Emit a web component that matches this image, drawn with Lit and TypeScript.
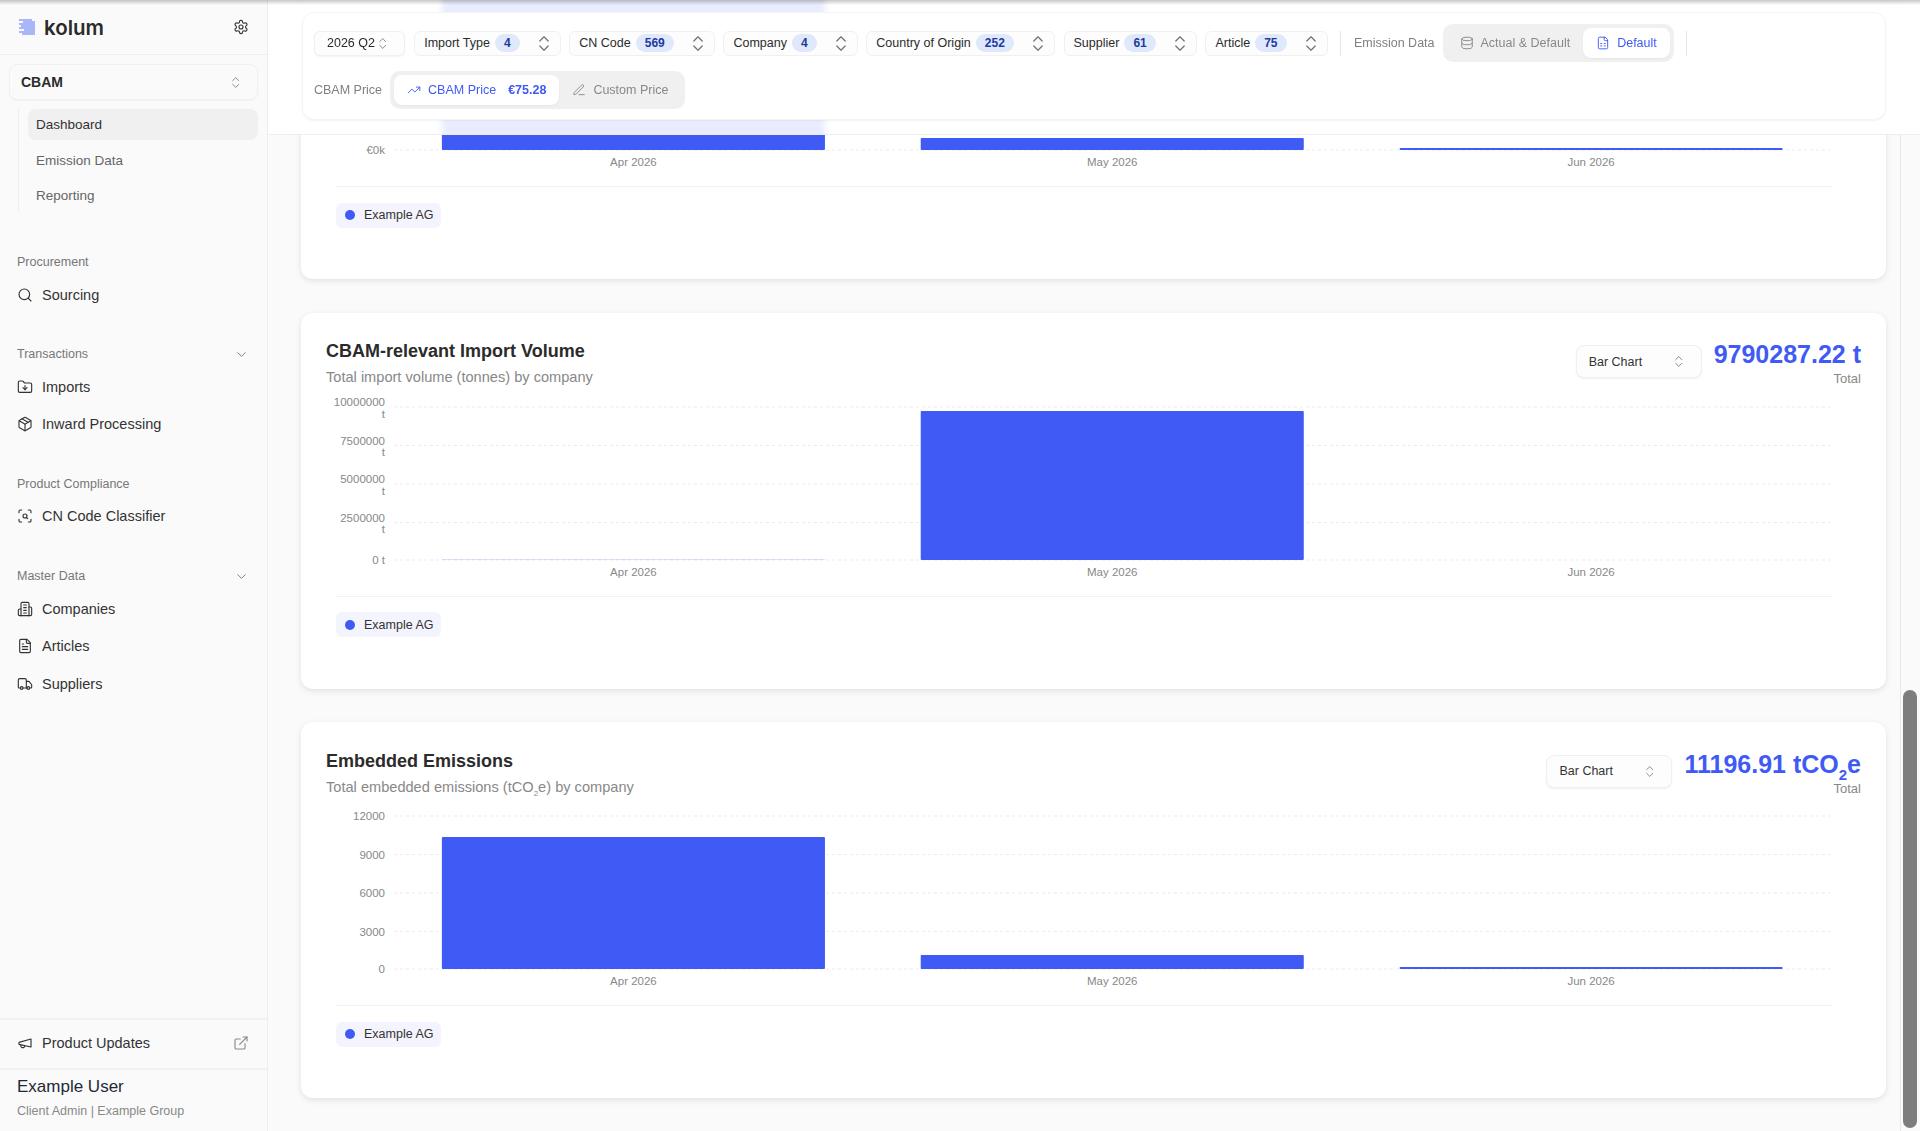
import { LitElement, html, css, svg } from 'lit';
import { customElement } from 'lit/decorators.js';

const ICONS: Record<string, unknown> = {
  settings: svg`<path d="M12.22 2h-.44a2 2 0 0 0-2 2v.18a2 2 0 0 1-1 1.73l-.43.25a2 2 0 0 1-2 0l-.15-.08a2 2 0 0 0-2.73.73l-.22.38a2 2 0 0 0 .73 2.73l.15.1a2 2 0 0 1 1 1.72v.51a2 2 0 0 1-1 1.74l-.15.09a2 2 0 0 0-.73 2.73l.22.38a2 2 0 0 0 2.73.73l.15-.08a2 2 0 0 1 2 0l.43.25a2 2 0 0 1 1 1.73V20a2 2 0 0 0 2 2h.44a2 2 0 0 0 2-2v-.18a2 2 0 0 1 1-1.73l.43-.25a2 2 0 0 1 2 0l.15.08a2 2 0 0 0 2.73-.73l.22-.39a2 2 0 0 0-.73-2.73l-.15-.08a2 2 0 0 1-1-1.74v-.5a2 2 0 0 1 1-1.74l.15-.09a2 2 0 0 0 .73-2.73l-.22-.38a2 2 0 0 0-2.73-.73l-.15.08a2 2 0 0 1-2 0l-.43-.25a2 2 0 0 1-1-1.73V4a2 2 0 0 0-2-2z"/><circle cx="12" cy="12" r="3"/>`,
  search: svg`<circle cx="11" cy="11" r="8"/><path d="m21 21-4.3-4.3"/>`,
  imports: svg`<path d="M20 20a2 2 0 0 0 2-2V8a2 2 0 0 0-2-2h-7.9a2 2 0 0 1-1.69-.9L9.6 3.9A2 2 0 0 0 7.93 3H4a2 2 0 0 0-2 2v13a2 2 0 0 0 2 2Z"/><path d="M12 10v6"/><path d="m15 13-3 3-3-3"/>`,
  package: svg`<path d="M11 21.73a2 2 0 0 0 2 0l7-4A2 2 0 0 0 21 16V8a2 2 0 0 0-1-1.73l-7-4a2 2 0 0 0-2 0l-7 4A2 2 0 0 0 3 8v8a2 2 0 0 0 1 1.73z"/><path d="M12 22V12"/><path d="m3.3 7 7.703 4.734a2 2 0 0 0 1.994 0L20.7 7"/><path d="m7.5 4.27 9 5.15"/>`,
  scan: svg`<path d="M3 7V5a2 2 0 0 1 2-2h2"/><path d="M17 3h2a2 2 0 0 1 2 2v2"/><path d="M21 17v2a2 2 0 0 1-2 2h-2"/><path d="M7 21H5a2 2 0 0 1-2-2v-2"/><circle cx="12" cy="12" r="3"/><path d="m16 16-1.9-1.9"/>`,
  building: svg`<path d="M6 22V4a2 2 0 0 1 2-2h8a2 2 0 0 1 2 2v18Z"/><path d="M6 12H4a2 2 0 0 0-2 2v6a2 2 0 0 0 2 2h2"/><path d="M18 9h2a2 2 0 0 1 2 2v9a2 2 0 0 1-2 2h-2"/><path d="M10 6h4"/><path d="M10 10h4"/><path d="M10 14h4"/><path d="M10 18h4"/>`,
  file: svg`<path d="M15 2H6a2 2 0 0 0-2 2v16a2 2 0 0 0 2 2h12a2 2 0 0 0 2-2V7Z"/><path d="M14 2v4a2 2 0 0 0 2 2h4"/><path d="M10 9H8"/><path d="M16 13H8"/><path d="M16 17H8"/>`,
  truck: svg`<path d="M14 18V6a2 2 0 0 0-2-2H4a2 2 0 0 0-2 2v11a1 1 0 0 0 1 1h2"/><path d="M15 18H9"/><path d="M19 18h2a1 1 0 0 0 1-1v-3.65a1 1 0 0 0-.22-.624l-3.48-4.35A1 1 0 0 0 17.52 8H14"/><circle cx="17" cy="18" r="2"/><circle cx="7" cy="18" r="2"/>`,
  megaphone: svg`<path d="m3 11 18-5v12L3 14v-3z"/><path d="M11.6 16.8a3 3 0 1 1-5.8-1.6"/>`,
  external: svg`<path d="M15 3h6v6"/><path d="M10 14 21 3"/><path d="M18 13v6a2 2 0 0 1-2 2H5a2 2 0 0 1-2-2V8a2 2 0 0 1 2-2h6"/>`,
  chevron: svg`<path d="m6 9 6 6 6-6"/>`,
  trending: svg`<path d="m22 7-8.5 8.5-5-5L2 17"/><path d="M16 7h6v6"/>`,
  pen: svg`<path d="M12 20h9"/><path d="M16.376 3.622a1 1 0 0 1 3.002 3.002L7.368 18.635a2 2 0 0 1-.855.506l-2.872.838a.5.5 0 0 1-.62-.62l.838-2.872a2 2 0 0 1 .506-.854z"/>`,
  database: svg`<ellipse cx="12" cy="5" rx="9" ry="3"/><path d="M3 5V19A9 3 0 0 0 21 19V5"/><path d="M3 12A9 3 0 0 0 21 12"/>`,
  sheet: svg`<path d="M15 2H6a2 2 0 0 0-2 2v16a2 2 0 0 0 2 2h12a2 2 0 0 0 2-2V7Z"/><path d="M14 2v4a2 2 0 0 0 2 2h4"/><path d="M8 13h2"/><path d="M14 13h2"/><path d="M8 17h2"/><path d="M14 17h2"/>`,
};

const icon = (name: string, cls = 'ic') =>
  html`<svg class=${cls} viewBox="0 0 24 24" fill="none" stroke="currentColor" stroke-width="2" stroke-linecap="round" stroke-linejoin="round">${ICONS[name]}</svg>`;

// up/down chevrons, cropped tight so the box is the drawn size
const updown = (cls = 'ud') =>
  html`<svg class=${cls} viewBox="6 3 12 18" fill="none" stroke="currentColor" stroke-width="1.6" stroke-linecap="round" stroke-linejoin="round"><path d="m7 15 5 5 5-5"/><path d="m7 9 5-5 5 5"/></svg>`;

const NAV = [
  { label: 'Procurement', items: [['search', 'Sourcing']] },
  { label: 'Transactions', collapsible: true, items: [['imports', 'Imports'], ['package', 'Inward Processing']] },
  { label: 'Product Compliance', items: [['scan', 'CN Code Classifier']] },
  { label: 'Master Data', collapsible: true, items: [['building', 'Companies'], ['file', 'Articles'], ['truck', 'Suppliers']] },
];

const FILTERS = [
  ['Import Type', '4'],
  ['CN Code', '569'],
  ['Company', '4'],
  ['Country of Origin', '252'],
  ['Supplier', '61'],
  ['Article', '75'],
];

const PLOT_LEFT = 68;
const PLOT_RIGHT = 1504.5;
const GRID = [15, 53.5, 92, 130.5, 168];
const MONTHS = ['Apr 2026', 'May 2026', 'Jun 2026'];

@customElement('bar-chart')
export class BarChart extends LitElement {
  static properties = {
    ticks: { attribute: false },
    bars: { attribute: false },
  };

  declare ticks: string[][];
  declare bars: number[];

  constructor() {
    super();
    this.ticks = [];
    this.bars = [];
  }

  static styles = css`
    :host { display: block; }
    svg { display: block; width: 100%; height: 204px; overflow: hidden; }
    text { font: 11.5px 'Liberation Sans', Arial, sans-serif; fill: #888; }
    .grid { stroke: #e9ebf1; stroke-dasharray: 3 3; }
    .bar { fill: #3f5af5; }
    .faint { fill: #3f5af5; opacity: 0.18; }
  `;

  render() {
    const band = (PLOT_RIGHT - PLOT_LEFT) / 3;
    return html`<svg>
      ${GRID.map((y) => svg`<line class="grid" x1=${PLOT_LEFT} x2=${PLOT_RIGHT} y1=${y} y2=${y}></line>`)}
      ${this.ticks.map((lines, i) =>
        lines.map((t, k) => {
          const y = lines.length > 1 ? GRID[i] - 5 + k * 11.5 : GRID[i];
          return svg`<text x="59" y=${y} dy="4" text-anchor="end">${t}</text>`;
        })
      )}
      ${this.bars.map((h, i) =>
        h > 0
          ? svg`<rect class=${h < 2 ? 'faint' : 'bar'} rx="1" x=${PLOT_LEFT + i * band + band * 0.1} y=${GRID[4] - h} width=${band * 0.8} height=${h}></rect>`
          : ''
      )}
      ${MONTHS.map((m, i) => svg`<text x=${PLOT_LEFT + i * band + band / 2} y="180" dy="4" text-anchor="middle">${m}</text>`)}
    </svg>`;
  }
}

@customElement('app-root')
export class AppRoot extends LitElement {
  static styles = css`
    :host {
      display: flex;
      position: relative;
      height: 100vh;
      overflow: hidden;
      background: #fafafa;
      color: #333;
      font-family: 'Liberation Sans', Arial, sans-serif;
      font-size: 14.5px;
    }
    .ic { width: 16px; height: 16px; flex: none; stroke-width: 1.7; }
    .ud { width: 10px; height: 15px; flex: none; color: #777; }
    .ud.small { width: 7.5px; height: 11px; color: #888; }

    .top-fade {
      position: absolute;
      top: 0;
      left: 0;
      right: 0;
      height: 5px;
      background: linear-gradient(rgba(0, 0, 0, 0.22), rgba(0, 0, 0, 0));
      z-index: 5;
    }

    /* sidebar */
    .side {
      width: 268px;
      flex: none;
      box-sizing: border-box;
      border-right: 1px solid #eeeeee;
      display: flex;
      flex-direction: column;
    }
    .brand {
      height: 55px;
      flex: none;
      box-sizing: border-box;
      border-bottom: 1px solid #eeeeee;
      display: flex;
      align-items: center;
      padding: 0 18px 0 19px;
      gap: 9px;
    }
    .brand svg.logo { width: 16px; height: 16px; }
    .brand b { font-family: Inter, sans-serif; font-size: 20.5px; font-weight: 600; flex: 1; color: #2b2b2b; }
    .brand .ic { color: #333; }
    .module {
      margin: 9px 9px 0;
      height: 36px;
      flex: none;
      box-sizing: border-box;
      border: 1px solid #f0f0f0;
      border-radius: 8px;
      box-shadow: 0 1px 2px rgba(0, 0, 0, 0.04);
      display: flex;
      align-items: center;
      justify-content: space-between;
      padding: 0 18px 0 11px;
      font-size: 14px;
      font-weight: 700;
      color: #2b2b2b;
    }
    .sub {
      margin: 9px 9px 0 18px;
      padding-left: 9px;
      border-left: 1px solid #eeeeee;
      display: flex;
      flex-direction: column;
      gap: 4.5px;
    }
    .sub div {
      height: 31px;
      display: flex;
      align-items: center;
      padding-left: 8px;
      border-radius: 8px;
      font-size: 13.5px;
      color: #666;
    }
    .sub div.on { background: #f0f0f0; color: #333; }
    nav { margin-top: 40px; display: flex; flex-direction: column; gap: 32.2px; }
    .group-label {
      height: 20px;
      box-sizing: border-box;
      display: flex;
      align-items: center;
      justify-content: space-between;
      padding: 2px 18px 0 17px;
      margin-bottom: 7px;
      font-size: 12.5px;
      color: #777;
    }
    .group-label .ic { width: 15px; height: 15px; stroke-width: 1.5; }
    .items { display: flex; flex-direction: column; gap: 4.5px; }
    .item {
      height: 33px;
      display: flex;
      align-items: center;
      gap: 9px;
      padding-left: 17px;
      color: #333;
    }
    .foot { margin-top: auto; }
    .updates {
      height: 50px;
      box-sizing: border-box;
      border-top: 2px solid #f1f1f1;
      display: flex;
      align-items: center;
      gap: 9px;
      padding: 0 18px 3px 17px;
    }
    .updates span { flex: 1; }
    .updates .ext { color: #888; }
    .user { border-top: 2px solid #f1f1f1; padding: 7px 17px 0; height: 63px; box-sizing: border-box; }
    .user strong { display: block; font-size: 17px; font-weight: 400; line-height: 20px; color: #1f2937; }
    .user small { display: block; margin-top: 6px; font-size: 12.5px; line-height: 16px; color: #888; }

    /* main */
    .main { flex: 1; min-width: 0; display: flex; position: relative; }
    .scroll-area {
      flex: 1;
      min-width: 0;
      height: 100%;
      overflow: hidden;
      padding: 0 14px 0 33px;
      box-sizing: border-box;
    }
    .cards { margin-top: -97px; display: flex; flex-direction: column; gap: 33.5px; }
    .track {
      width: 20px;
      flex: none;
      box-sizing: border-box;
      border-left: 1px solid #e8e8e8;
      padding: 690px 3px 3px 2px;
    }
    .thumb { height: 100%; border-radius: 7px; background: #7d7d7d; }

    .bar-top {
      position: absolute;
      top: 0;
      left: 0;
      right: 0;
      height: 135px;
      box-sizing: border-box;
      padding: 12px 34px 0 34px;
      background: rgba(255, 255, 255, 0.885);
      backdrop-filter: blur(3px);
      border-bottom: 1px solid #eeeeee;
    }
    .filters {
      height: 108px;
      box-sizing: border-box;
      background: #fff;
      border: 1px solid #f4f4f4;
      border-radius: 12px;
      box-shadow: 0 1px 2px rgba(0, 0, 0, 0.05);
      padding: 11px 11px;
      display: flex;
      flex-wrap: wrap;
      align-items: center;
      align-content: flex-start;
      gap: 9px 8.7px;
      font-size: 12.5px;
    }
    .filter {
      height: 25px;
      box-sizing: border-box;
      border: 1px solid #f0f0f0;
      border-radius: 6px;
      background: #fdfdfd;
      display: flex;
      align-items: center;
      padding: 0 11px 0 9px;
      color: #2b2b2b;
    }
    .filter.period { padding: 0 18px 0 12px; gap: 4px; box-shadow: 0 1px 2px rgba(0, 0, 0, 0.05); }
    .count {
      height: 18px;
      padding: 0 9px;
      margin: 0 19px 0 5px;
      border-radius: 9px;
      background: #dfe9fb;
      color: #1e3a9f;
      font-weight: 700;
      font-size: 12px;
      display: flex;
      align-items: center;
    }
    .rule { width: 1px; height: 25px; background: #e6e6ea; margin: 0 4px; }
    .labelled { display: flex; align-items: center; gap: 8px; }
    .tag { color: #808080; }
    .switch {
      display: flex;
      height: 38px;
      box-sizing: border-box;
      padding: 4px;
      border-radius: 10px;
      background: #f0f0f0;
    }
    .switch div {
      height: 30px;
      display: flex;
      align-items: center;
      gap: 7px;
      padding: 0 13px;
      border-radius: 8px;
      color: #888;
    }
    .switch .ic { width: 14px; height: 14px; stroke-width: 1.6; }
    .switch div.on { background: #fff; color: #3f5af5; box-shadow: 0 1px 2px rgba(0, 0, 0, 0.05); }
    .switch div b { font-weight: 700; margin-left: 5px; }

    /* chart cards */
    .card {
      height: 376px;
      flex: none;
      box-sizing: border-box;
      background: #fff;
      border-radius: 12px;
      box-shadow: 0 2px 6px rgba(0, 0, 0, 0.1);
      padding: 26.5px 25px 0;
    }
    .head { height: 52.5px; display: flex; align-items: flex-start; gap: 12px; }
    .titles { flex: 1; }
    h3 { margin: 0; font-size: 18px; font-weight: 700; line-height: 24px; color: #2b2b2b; }
    .titles p { margin: 4px 0 0; font-size: 14.6px; line-height: 20px; color: #888; }
    .titles sub { font-size: 8px; line-height: 0; }
    .kind {
      width: 126px;
      height: 33px;
      margin-top: 6px;
      box-sizing: border-box;
      border: 1px solid #f0f0f0;
      border-radius: 8px;
      background: #fdfdfd;
      box-shadow: 0 1px 2px rgba(0, 0, 0, 0.06);
      display: flex;
      align-items: center;
      justify-content: space-between;
      padding: 0 18px 0 12px;
      font-size: 12.5px;
    }
    .sum { text-align: right; }
    .sum strong { display: block; margin-top: 1px; font-size: 25px; font-weight: 700; line-height: 28px; color: #3f5af5; white-space: nowrap; }
    .sum strong sub { font-size: 15px; line-height: 0; vertical-align: -0.45em; }
    .sum span { display: block; margin-top: 3px; font-size: 13px; line-height: 16px; color: #888; }
    .legend {
      margin: 0 29px 0 10px;
      padding-top: 15.5px;
      border-top: 1px solid #f2f2f2;
      display: flex;
    }
    .chip {
      height: 25px;
      display: flex;
      align-items: center;
      gap: 9px;
      padding: 0 8px 0 9px;
      border-radius: 6px;
      background: #f3f4fe;
      font-size: 12.5px;
      color: #333;
    }
    .chip i { width: 10px; height: 10px; border-radius: 50%; background: #3f5af5; }
  `;

  renderSidebar() {
    return html`<aside class="side">
      <div class="brand">
        <svg class="logo" viewBox="0 0 16 16" fill="#5a72f7">
          <rect x="0" y="0.5" width="13" height="1"></rect>
          <rect x="4" y="2.5" width="12" height="1"></rect>
          <rect x="0" y="4.5" width="16" height="1"></rect>
          <rect x="2" y="6.5" width="14" height="1"></rect>
          <rect x="0" y="8.5" width="16" height="1"></rect>
          <rect x="5" y="10.5" width="11" height="1"></rect>
          <rect x="0" y="12.5" width="16" height="1"></rect>
          <rect x="3" y="14.5" width="13" height="1"></rect>
        </svg>
        <b>kolum</b>
        ${icon('settings')}
      </div>
      <div class="module">CBAM ${updown('ud small')}</div>
      <div class="sub">
        <div class="on">Dashboard</div>
        <div>Emission Data</div>
        <div>Reporting</div>
      </div>
      <nav>
        ${NAV.map(
          (g) => html`<section>
            <div class="group-label">${g.label} ${g.collapsible ? icon('chevron') : ''}</div>
            <div class="items">
              ${g.items.map(([i, t]) => html`<div class="item">${icon(i)}<span>${t}</span></div>`)}
            </div>
          </section>`
        )}
      </nav>
      <div class="foot">
        <div class="updates">${icon('megaphone')}<span>Product Updates</span>${icon('external', 'ic ext')}</div>
        <div class="user">
          <strong>Example User</strong>
          <small>Client Admin | Example Group</small>
        </div>
      </div>
    </aside>`;
  }

  renderFilters() {
    return html`<div class="bar-top">
      <div class="filters">
        <div class="filter period">2026 Q2 ${updown('ud small')}</div>
        ${FILTERS.map(([l, n]) => html`<div class="filter">${l}<span class="count">${n}</span>${updown()}</div>`)}
        <div class="rule"></div>
        <div class="labelled">
          <span class="tag">Emission Data</span>
          <div class="switch">
            <div>${icon('database')}Actual &amp; Default</div>
            <div class="on">${icon('sheet')}Default</div>
          </div>
        </div>
        <div class="rule"></div>
        <div class="labelled">
          <span class="tag">CBAM Price</span>
          <div class="switch">
            <div class="on">${icon('trending')}CBAM Price <b>€75.28</b></div>
            <div>${icon('pen')}Custom Price</div>
          </div>
        </div>
      </div>
    </div>`;
  }

  renderCard(c: { title?: unknown; sub?: unknown; value?: unknown; ticks: string[][]; bars: number[] }) {
    return html`<section class="card">
      <div class="head">
        ${c.title
          ? html`<div class="titles"><h3>${c.title}</h3><p>${c.sub}</p></div>
              <div class="kind">Bar Chart ${updown('ud small')}</div>
              <div class="sum"><strong>${c.value}</strong><span>Total</span></div>`
          : ''}
      </div>
      <bar-chart .ticks=${c.ticks} .bars=${c.bars}></bar-chart>
      <div class="legend"><div class="chip"><i></i>Example AG</div></div>
    </section>`;
  }

  render() {
    const cards = [
      // scrolled mostly out of view, only the foot of this chart shows
      { ticks: [[], [], [], [], ['€0k']], bars: [155, 12, 2] },
      {
        title: 'CBAM-relevant Import Volume',
        sub: 'Total import volume (tonnes) by company',
        value: '9790287.22 t',
        ticks: [['10000000', 't'], ['7500000', 't'], ['5000000', 't'], ['2500000', 't'], ['0 t']],
        bars: [1, 149, 0],
      },
      {
        title: 'Embedded Emissions',
        sub: html`Total embedded emissions (tCO<sub>2</sub>e) by company`,
        value: html`11196.91 tCO<sub>2</sub>e`,
        ticks: [['12000'], ['9000'], ['6000'], ['3000'], ['0']],
        bars: [132, 14, 2],
      },
    ];
    return html`
      ${this.renderSidebar()}
      <main class="main">
        <div class="scroll-area">
          <div class="cards">${cards.map((c) => this.renderCard(c))}</div>
        </div>
        <div class="track"><div class="thumb"></div></div>
        ${this.renderFilters()}
      </main>
      <div class="top-fade"></div>
    `;
  }
}
